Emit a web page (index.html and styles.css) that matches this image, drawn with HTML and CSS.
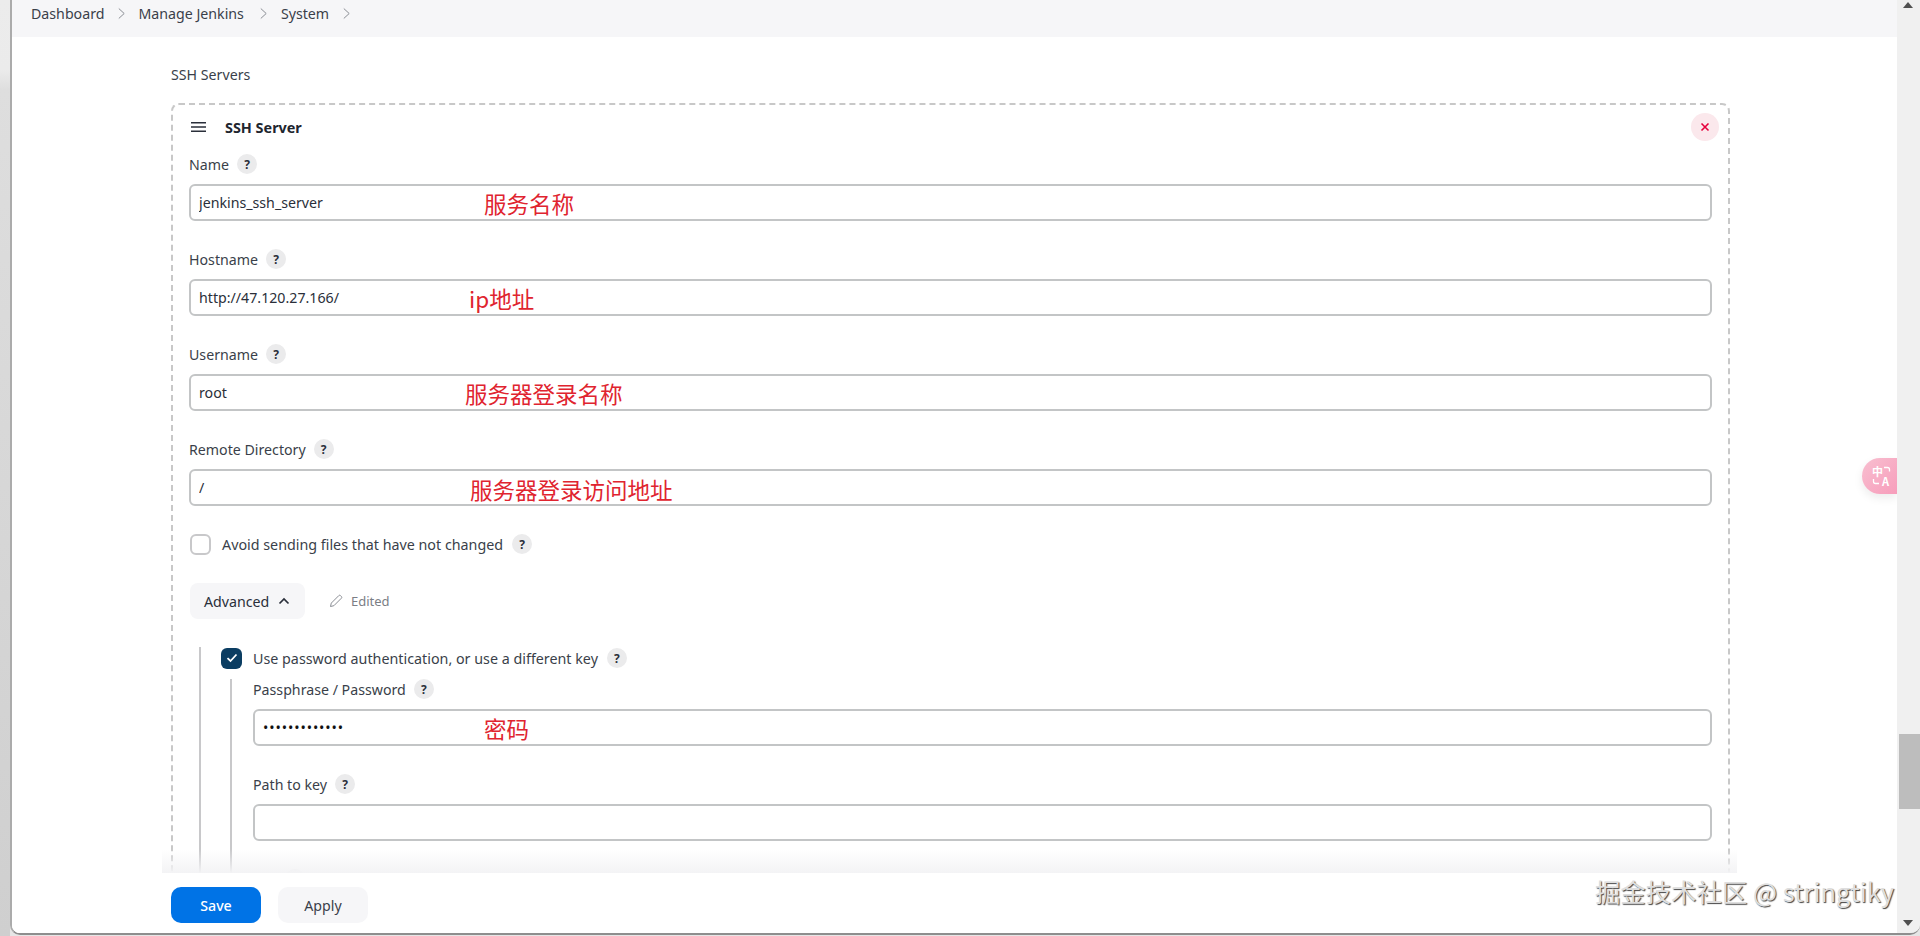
FILE: index.html
```html
<!DOCTYPE html>
<html lang="en">
<head>
  <meta charset="UTF-8" />
  <title>System - Jenkins</title>
  <link rel="stylesheet" href="styles.css">
</head>
<body>

<div class="window">
  <div class="side-strip"></div>

  <div class="frame">
    <div class="page">
      <nav class="breadcrumbs">
        <a>Dashboard</a>
        <svg class="crumb-sep" viewBox="0 0 10 14"><path d="M2 1.500 8 7l-6 5.500"/></svg>
        <a>Manage Jenkins</a>
        <svg class="crumb-sep" viewBox="0 0 10 14"><path d="M2 1.500 8 7l-6 5.500"/></svg>
        <a>System</a>
        <svg class="crumb-sep" viewBox="0 0 10 14"><path d="M2 1.500 8 7l-6 5.500"/></svg>
      </nav>

      <main class="content">
        <div class="section-title">SSH Servers</div>

        <div class="repeated-chunk">
          <div class="chunk-header">
            <svg class="drag-handle" viewBox="0 0 16 12"><path d="M0 1.500h16M0 6h16M0 10.500h16"/></svg>
            <b>SSH Server</b>
            <button class="chunk-delete">
              <svg viewBox="0 0 10 10"><path d="M1.500 1.500l7 7M8.500 1.500l-7 7"/></svg>
            </button>
          </div>

          <div class="field">
            <label class="field-label">Name <span class="help">?</span></label>
            <div class="input-wrap">
              <input class="text-input" type="text" value="jenkins_ssh_server">
              <span class="note note-name">服务名称</span>
            </div>
          </div>

          <div class="field">
            <label class="field-label">Hostname <span class="help">?</span></label>
            <div class="input-wrap">
              <input class="text-input" type="text" value="http://47.120.27.166/">
              <span class="note note-host">ip地址</span>
            </div>
          </div>

          <div class="field">
            <label class="field-label">Username <span class="help">?</span></label>
            <div class="input-wrap">
              <input class="text-input" type="text" value="root">
              <span class="note note-user">服务器登录名称</span>
            </div>
          </div>

          <div class="field">
            <label class="field-label">Remote Directory <span class="help">?</span></label>
            <div class="input-wrap">
              <input class="text-input" type="text" value="/">
              <span class="note note-dir">服务器登录访问地址</span>
            </div>
          </div>

          <div class="check-row">
            <span class="checkbox"></span>
            <span>Avoid sending files that have not changed</span>
            <span class="help">?</span>
          </div>

          <div class="advanced-row">
            <button class="btn-advanced">Advanced
              <svg viewBox="0 0 12 8"><path d="M1.500 6.500 6 2l4.500 4.500"/></svg>
            </button>
            <span class="edited">
              <svg viewBox="0 0 14 14"><path d="M1.500 12.500l.8-3.400L9.800 1.600a1.200 1.200 0 0 1 1.700 0l.9.9a1.200 1.200 0 0 1 0 1.700l-7.500 7.500z"/></svg>
              Edited
            </span>
          </div>

          <div class="advanced-body">
            <div class="check-row check-row-on">
              <span class="checkbox checked">
                <svg viewBox="0 0 12 10"><path d="M1.500 5.200 4.500 8l6-6.500"/></svg>
              </span>
              <span>Use password authentication, or use a different key</span>
              <span class="help">?</span>
            </div>

            <div class="nested">
              <div class="field">
                <label class="field-label">Passphrase / Password <span class="help">?</span></label>
                <div class="input-wrap">
                  <input class="text-input" type="password" value="1234567890123">
                  <span class="note note-pass">密码</span>
                </div>
              </div>

              <div class="field">
                <label class="field-label">Path to key <span class="help">?</span></label>
                <div class="input-wrap">
                  <input class="text-input" type="text">
                </div>
              </div>

              <div class="field">
                <label class="field-label">Key <span class="help">?</span></label>
                <div class="input-wrap">
                  <input class="text-input" type="text">
                </div>
              </div>
            </div>
          </div>
        </div>
      </main>

      <div class="bottom-bar">
        <button class="btn-save">Save</button>
        <button class="btn-apply">Apply</button>
      </div>

      <!-- translate plugin tab -->
      <div class="translate-tab">
        <svg viewBox="0 -3 22 25">
          <text class="tab-glyph" x="1" y="11">中</text>
          <text class="tab-glyph" x="11" y="20.500">A</text>
          <path d="M13 2.500h3.500a2 2 0 0 1 2 2v2M2.500 14v2.500a2 2 0 0 0 2 2H8"/>
        </svg>
      </div>

      <div class="watermark">掘金技术社区 @ stringtiky</div>
    </div>

    <div class="scrollbar">
      <span class="arrow-up"></span>
      <span class="thumb"></span>
      <span class="arrow-down"></span>
    </div>
  </div>
</div>

</body>
</html>
```

FILE: styles.css
```css
* {
  box-sizing: border-box;
}

html, body {
  margin: 0;
  height: 100%;
  overflow: hidden;
}

body {
  font-family: "Noto Sans", "Noto Sans CJK SC", sans-serif;
  font-size: 14.2px;
  color: #2a2f3a;
  background: #e6e6e6;
}

.window {
  display: flex;
  height: 936px;
}

.side-strip {
  width: 10px;
  flex: none;
  background: linear-gradient(#ececec 0, #ebebeb 70px, #dedede 90px, #cfcfcf 100%);
}

.frame {
  display: flex;
  flex: 1;
  min-width: 0;
  height: 935px;
  overflow: hidden;
  border-left: 2px solid #ababab;
  border-bottom: 2px solid #8e8e8e;
  border-radius: 0 0 10px 10px;
}

.page {
  position: relative;
  flex: 1;
  min-width: 0;
  overflow: hidden;
  background: #ffffff;
}

/* Breadcrumbs */
.breadcrumbs {
  display: flex;
  align-items: center;
  height: 37px;
  padding: 0 0 10px 19px;
  background: #f6f6f8;
  color: #3a3f4a;
}

.crumb-sep {
  width: 9px;
  height: 13px;
  margin: 0 12px 0 13px;
  fill: none;
  stroke: #8a8d94;
  stroke-width: 1.1;
}

.breadcrumbs a:nth-of-type(2) {
  margin-right: 2px;
}

.breadcrumbs a:nth-of-type(3) {
  margin-left: 1px;
}

/* Main form */
.content {
  padding: 27px 167px 0 159px;
}

.section-title {
  height: 22px;
  line-height: 22px;
  margin-bottom: 17px;
  color: #3a3f4a;
}

.repeated-chunk {
  border: 2px dashed #c8c8c8;
  border-radius: 8px;
  padding: 0 16px 0 16px;
}

.chunk-header {
  display: flex;
  align-items: center;
  height: 44px;
  margin-bottom: 3px;
  padding-left: 2px;
}

.chunk-header b {
  color: #20252e;
  font-size: 14.400px;
  font-weight: 700;
}

.drag-handle {
  width: 15px;
  height: 12px;
  margin-right: 19px;
  fill: none;
  stroke: #2a2f3a;
  stroke-width: 1.600;
}

.chunk-delete {
  margin-left: auto;
  margin-right: -7px;
  width: 28px;
  height: 28px;
  padding: 0;
  border: 0;
  border-radius: 50%;
  background: #fbe8ec;
  display: flex;
  align-items: center;
  justify-content: center;
}

.chunk-delete svg {
  width: 10px;
  height: 10px;
  fill: none;
  stroke: #e6003c;
  stroke-width: 1.600;
}

.field {
  margin-bottom: 26px;
}

.field-label {
  display: flex;
  align-items: center;
  gap: 8px;
  height: 24px;
  margin-bottom: 8px;
  color: #3a3f4a;
}

.help {
  display: inline-flex;
  align-items: center;
  justify-content: center;
  width: 20px;
  height: 20px;
  flex: none;
  border-radius: 50%;
  background: #ebebec;
  color: #2a2f3a;
  font-size: 12px;
  font-weight: 700;
}

.input-wrap {
  position: relative;
}

.text-input {
  display: block;
  width: 100%;
  height: 37px;
  padding: 0 8px;
  border: 2px solid #c3c5c6;
  border-radius: 6px;
  background: #ffffff;
  color: #2a2f3a;
  font: inherit;
  outline: none;
}

.text-input[type="password"] {
  letter-spacing: 0.9px;
  color: #111111;
}

/* red notes drawn over the screenshot */
.note {
  position: absolute;
  top: 3px;
  color: #e0242f;
  font-family: "Noto Sans CJK SC", sans-serif;
  font-size: 22.500px;
  line-height: 32px;
  white-space: nowrap;
  pointer-events: none;
}

.note-name { left: 295px; }
.note-host { left: 280px; }
.note-user { left: 276px; }
.note-dir { left: 281px; top: 4px; }
.note-pass { left: 231px; }

.check-row {
  display: flex;
  align-items: center;
  gap: 11px;
  height: 24px;
  margin: 3px 0 0 1px;
  color: #3a3f4a;
  font-size: 14.300px;
}

.check-row .help {
  margin-left: -2px;
}

.checkbox {
  width: 21px;
  height: 21px;
  flex: none;
  border: 2px solid #c8c8ca;
  border-radius: 6px;
  background: #ffffff;
}

.checkbox.checked {
  display: flex;
  align-items: center;
  justify-content: center;
  border: 0;
  background: #0b3d62;
}

.checkbox.checked svg {
  width: 12px;
  height: 10px;
  fill: none;
  stroke: #ffffff;
  stroke-width: 1.800;
}

.advanced-row {
  display: flex;
  align-items: center;
  gap: 24px;
  margin: 27px 0 0 1px;
}

.btn-advanced {
  display: flex;
  align-items: center;
  gap: 9px;
  width: 115px;
  height: 36px;
  padding: 0 14px;
  border: 0;
  border-radius: 8px;
  background: #f6f6f8;
  color: #2a2f3a;
  font: inherit;
  white-space: nowrap;
}

.btn-advanced svg {
  width: 12px;
  height: 8px;
  fill: none;
  stroke: #2a2f3a;
  stroke-width: 1.700;
}

.edited {
  display: flex;
  align-items: center;
  gap: 8px;
  color: #7b7e85;
  font-size: 13px;
}

.edited svg {
  width: 14px;
  height: 14px;
  fill: none;
  stroke: #8a8d94;
  stroke-width: 1;
}

.advanced-body {
  margin: 28px 0 0 10px;
  padding-left: 19px;
  border-left: 2px solid #c8c8ca;
}

.check-row-on {
  height: 22px;
  margin-top: 0;
}

.nested {
  margin: 10px 0 0 10px;
  padding-left: 21px;
  border-left: 2px solid #c8c8ca;
}

.nested .field {
  margin-bottom: 28px;
}

.nested .field-label {
  height: 20px;
  margin-bottom: 10px;
}

/* Save / Apply overlay */
.bottom-bar {
  position: absolute;
  left: 0;
  right: 0;
  bottom: 0;
  display: flex;
  gap: 17px;
  height: 60px;
  padding: 14px 0 0 159px;
  background: #ffffff;
}

.bottom-bar::before {
  content: "";
  position: absolute;
  top: -24px;
  left: 150px;
  right: 160px;
  height: 24px;
  background: linear-gradient(rgba(243, 243, 245, 0), #f3f3f5);
}

.btn-save,
.btn-apply {
  width: 90px;
  height: 36px;
  border: 0;
  border-radius: 10px;
  font: inherit;
}

.btn-save {
  background: #0073e6;
  color: #ffffff;
  font-weight: 500;
}

.btn-apply {
  background: #f6f6f8;
  color: #3a3f4a;
}

.translate-tab {
  position: absolute;
  top: 458px;
  right: 0;
  display: flex;
  align-items: center;
  justify-content: center;
  width: 35px;
  height: 36px;
  padding-left: 4px;
  border-radius: 18px 0 0 18px;
  background: linear-gradient(135deg, #f8bfd0, #f79dbb);
  box-shadow: 0 4px 10px rgba(0, 0, 0, 0.08);
}

.translate-tab svg {
  width: 22px;
  height: 25px;
  margin-top: -3px;
  fill: none;
  stroke: #ffffff;
  stroke-width: 1.300;
}

.tab-glyph {
  fill: #ffffff;
  stroke: none;
  font-family: "Noto Sans CJK SC", sans-serif;
  font-size: 11px;
  font-weight: 700;
}

.watermark {
  position: absolute;
  right: 3px;
  bottom: 25px;
  color: #dedede;
  font-family: "Noto Sans CJK SC", sans-serif;
  font-size: 25.400px;
  line-height: 34px;
  white-space: nowrap;
  text-shadow: 1px 1px 1px #444444;
}

/* Browser scrollbar */
.scrollbar {
  position: relative;
  width: 23px;
  flex: none;
  background: #f0f0f0;
}

.thumb {
  position: absolute;
  top: 734px;
  left: 2px;
  right: 0;
  height: 75px;
  background: #bdbdbd;
}

.arrow-up,
.arrow-down {
  position: absolute;
  left: 6px;
  width: 0;
  height: 0;
  border-left: 5.500px solid transparent;
  border-right: 5.500px solid transparent;
}

.arrow-up {
  top: 2px;
  border-bottom: 6px solid #505050;
}

.arrow-down {
  bottom: 7px;
  border-top: 6px solid #505050;
}
```
